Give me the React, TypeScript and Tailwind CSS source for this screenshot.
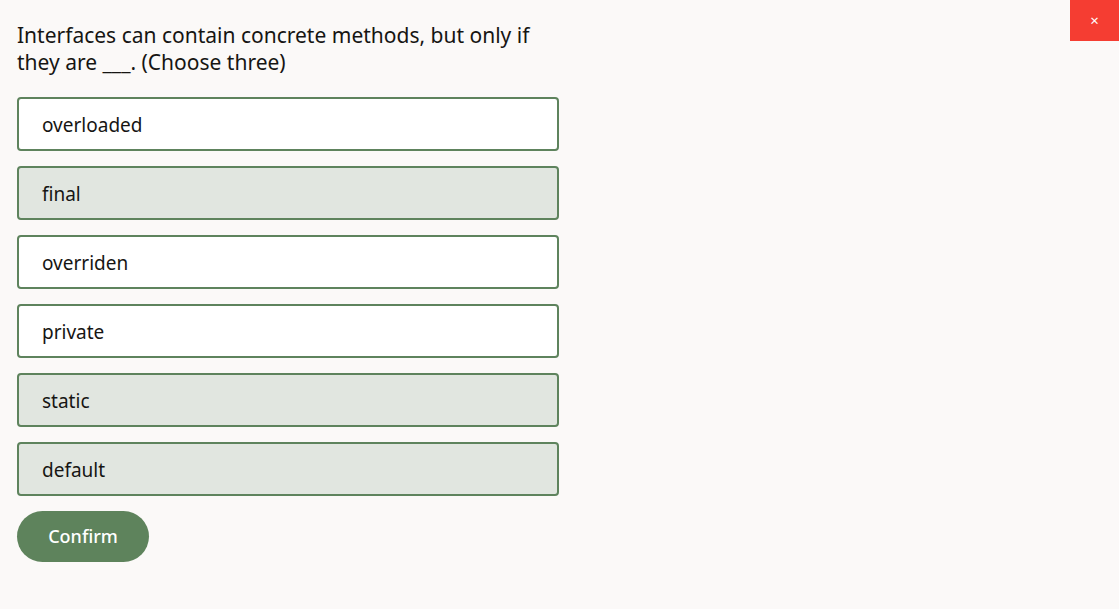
import React, { useState } from "react";

const options = [
  { label: "overloaded", selected: false },
  { label: "final", selected: true },
  { label: "overriden", selected: false },
  { label: "private", selected: false },
  { label: "static", selected: true },
  { label: "default", selected: true },
];

export default function App() {
  const [picked, setPicked] = useState(options.map((o) => o.selected));

  return (
    <div
      className="relative min-h-[609px] w-full bg-[#fbf9f8] text-[#161513]"
      style={{ fontFamily: '"Noto Sans", "Open Sans", sans-serif' }}
    >
      <button className="absolute right-0 top-0 flex h-[41px] w-[49px] items-center justify-center bg-[#f53d32] text-[15px] text-white">
        ×
      </button>

      <div className="w-[542px] pl-[17px] pt-[22px] box-content">
        <h1 className="w-[530px] text-[21px] leading-[27px]">
          Interfaces can contain concrete methods, but only if they are ___. (Choose three)
        </h1>

        <div className="mt-[21px] flex flex-col gap-[15px]">
          {options.map((o, i) => (
            <button
              key={o.label}
              onClick={() =>
                setPicked((p) => p.map((v, j) => (j === i ? !v : v)))
              }
              className={`flex h-[54px] w-[542px] items-center rounded-[4px] border-2 border-[#5e835d] pl-[23px] pt-[2px] text-left text-[19px] ${
                picked[i] ? "bg-[#e1e6e0]" : "bg-white"
              }`}
            >
              {o.label}
            </button>
          ))}
        </div>

        <button className="mt-[15px] h-[51px] w-[132px] rounded-full bg-[#5e835c] text-[18px] font-medium text-white">
          Confirm
        </button>
      </div>
    </div>
  );
}
